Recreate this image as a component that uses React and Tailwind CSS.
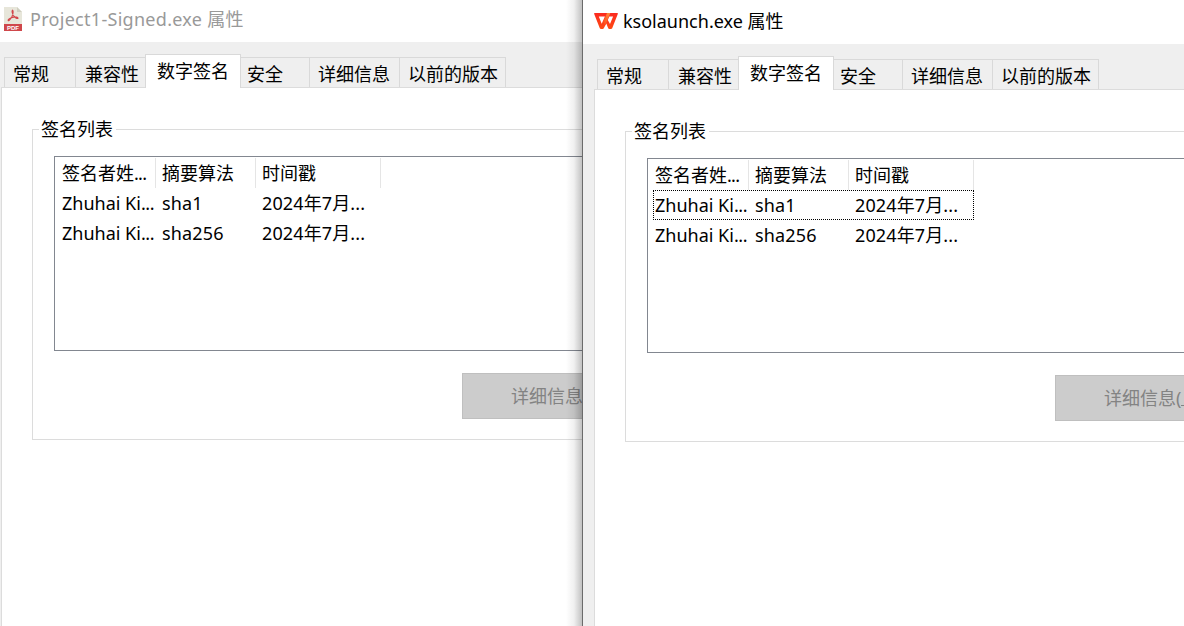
import React from "react";

const tabs = [
  { label: "常规", box: "w-[71px] border-l pl-[8px]" },
  { label: "兼容性", box: "w-[70px] border-l pl-[9px]" },
  { label: "数字签名", active: true },
  { label: "安全", box: "w-[68px] pl-[6px]" },
  { label: "详细信息", box: "w-[90px] border-l pl-[8px]" },
  { label: "以前的版本", box: "w-[107px] border-x pl-[8px]" },
];

const signatures = [
  { name: "Zhuhai Ki", digest: "sha1", time: "2024年7月" },
  { name: "Zhuhai Ki", digest: "sha256", time: "2024年7月" },
];

function PdfIcon() {
  return (
    <svg width="18" height="24" viewBox="0 0 18 24" className="shrink-0">
      <path d="M0 0H13L18 5V17H0Z" fill="#e7e6da" />
      <path d="M13 0L18 5H13Z" fill="#d0cfc0" />
      <path
        d="M8.5 3.2C7.8 3.8 8.3 6.3 9.5 8.5C10.8 10.6 13 12 14 11.3C14.5 10.2 11.5 9.6 8.6 10.4C5.8 11 3.6 12.8 4.2 13.5C5 14.2 7 11.6 8.1 9.2C9.1 6.6 9.3 3.7 8.5 3.2Z"
        fill="none"
        stroke="#d2474b"
        strokeWidth="1.1"
      />
      <path d="M0 17H18V24H0Z" fill="#cf474b" />
      <text x="9" y="22.8" textAnchor="middle" fontSize="6" fontWeight="700" fill="#fff" fontFamily="Liberation Sans, sans-serif" textLength="12">
        PDF
      </text>
    </svg>
  );
}

function WpsIcon() {
  return (
    <svg width="24" height="16" viewBox="0 0 24 16" className="shrink-0">
      <defs>
        <linearGradient id="wps" x1="0" y1="0" x2="0" y2="1">
          <stop offset="0" stopColor="#fb2a20" />
          <stop offset="1" stopColor="#ff4a12" />
        </linearGradient>
        <linearGradient id="fold" x1="1" y1="0" x2="0" y2="1">
          <stop offset="0" stopColor="#ff9440" />
          <stop offset="1" stopColor="#ff4416" />
        </linearGradient>
      </defs>
      <path
        fillRule="evenodd"
        fill="url(#wps)"
        d="M0.6 0H23.4Q24.2 0 23.8 0.9L18.2 15.2Q17.8 16 17 16H15.3Q14.6 16 14.2 15.2L12.3 10.6L9.8 15.2Q9.4 16 8.7 16H7Q6.2 16 5.8 15.2L0.2 0.9Q-0.2 0 0.6 0ZM4.8 3.6L7.7 10.8L10.9 3.6ZM15.3 3.6L13.8 7L16 11L19.1 3.6Z"
      />
      <path d="M13 0H16.3L11 12.6L9.2 9Z" fill="url(#fold)" />
    </svg>
  );
}

function PropertiesWindow({ icon, title, titleClass, focused, buttonLabel }) {
  return (
    <div className="flex h-[626px] w-[760px] shrink-0 flex-col bg-[#efefef] text-[18px] leading-[24px] text-black">
      <header className="flex h-[42px] shrink-0 items-start bg-white">
        {icon}
        <h1 className={titleClass}>{title}</h1>
      </header>

      <nav className="flex h-[45px] shrink-0 items-end pl-[14px]">
        {tabs.map((tab) =>
          tab.active ? (
            <div
              key={tab.label}
              className="relative z-10 -mb-px h-[34px] w-[96px] whitespace-nowrap border-x border-t border-[#d9d9d9] bg-white pl-[11px] pt-[4px]"
            >
              {tab.label}
            </div>
          ) : (
            <div key={tab.label} className={`h-[30px] whitespace-nowrap border-t border-[#d9d9d9] pt-[4px] ${tab.box}`}>
              {tab.label}
            </div>
          )
        )}
      </nav>

      <main className="ml-[11px] grow border-l border-t border-[#dcdcdc] bg-white pl-[30px] pt-[29px]">
        <fieldset className="h-[323px] w-[700px] border border-[#dcdcdc] pl-[21px]">
          <legend className="-ml-[15px] h-[24px] w-[77px] whitespace-nowrap pl-[2px]">签名列表</legend>
          <div className="mt-[15px] h-[195px] border border-[#828790] pl-[5px] pt-px">
            <div className="flex h-[30px] items-center">
              <span className="h-full w-[96px] border-r border-[#e5e5e5] pl-[2px] pt-[3px]">
                签名者姓<span className="tracking-[-0.7px]">...</span>
              </span>
              <span className="h-full w-[100px] border-r border-[#e5e5e5] pl-[6px] pt-[3px]">摘要算法</span>
              <span className="h-full w-[125px] border-r border-[#e5e5e5] pl-[6px] pt-[3px]">时间戳</span>
            </div>
            {signatures.map((row, i) => (
              <div
                key={row.digest}
                className={`flex h-[30px] w-[321px] items-center whitespace-nowrap border border-dotted ${
                  focused && i === 0 ? "border-black" : "border-transparent"
                }`}
              >
                <span className="w-[100px] pl-px">
                  {row.name}<span className="tracking-[-0.4px]">...</span>
                </span>
                <span className="w-[100px] pl-px tracking-[0.15px]">{row.digest}</span>
                <span className="pl-px tracking-[0.12px]">{row.time}...</span>
              </div>
            ))}
          </div>
          <button
            disabled
            className="ml-[408px] mt-[22px] block h-[46px] w-[196px] whitespace-nowrap border border-[#bfbfbf] bg-[#ccc] pl-[48px] text-left text-[#838383]"
          >
            {buttonLabel}
          </button>
        </fieldset>
      </main>
    </div>
  );
}

export default function App() {
  return (
    <div className="flex h-[626px] w-[1184px] overflow-hidden bg-white font-['Noto_Sans','Noto_Sans_CJK_SC',sans-serif]">
      <section className="relative w-[582px] shrink-0 overflow-hidden">
        <div className="-ml-[10px]">
          <PropertiesWindow
            icon={<div className="ml-[14px] mt-[7px]"><PdfIcon /></div>}
            title="Project1-Signed.exe 属性"
            titleClass="ml-[8px] mt-[7px] whitespace-nowrap tracking-[0.29px] text-[#999]"
            buttonLabel="详细信息"
          />
        </div>
        <div className="absolute inset-y-0 right-0 z-20 w-[16px] bg-linear-to-r from-transparent via-black/6 to-black/24" />
      </section>
      <section className="w-[602px] shrink-0 overflow-hidden border-l border-[#6b6b6b] bg-white pt-[2px]">
        <PropertiesWindow
          focused
          icon={<div className="ml-[11px] mt-[11px]"><WpsIcon /></div>}
          title="ksolaunch.exe 属性"
          titleClass="ml-[5px] mt-[7px] whitespace-nowrap"
          buttonLabel={
            <>
              详细信息(<span className="inline-block h-[20px] border-b border-[#838383] pl-[2px] leading-[24px]">D</span>)
            </>
          }
        />
      </section>
    </div>
  );
}
